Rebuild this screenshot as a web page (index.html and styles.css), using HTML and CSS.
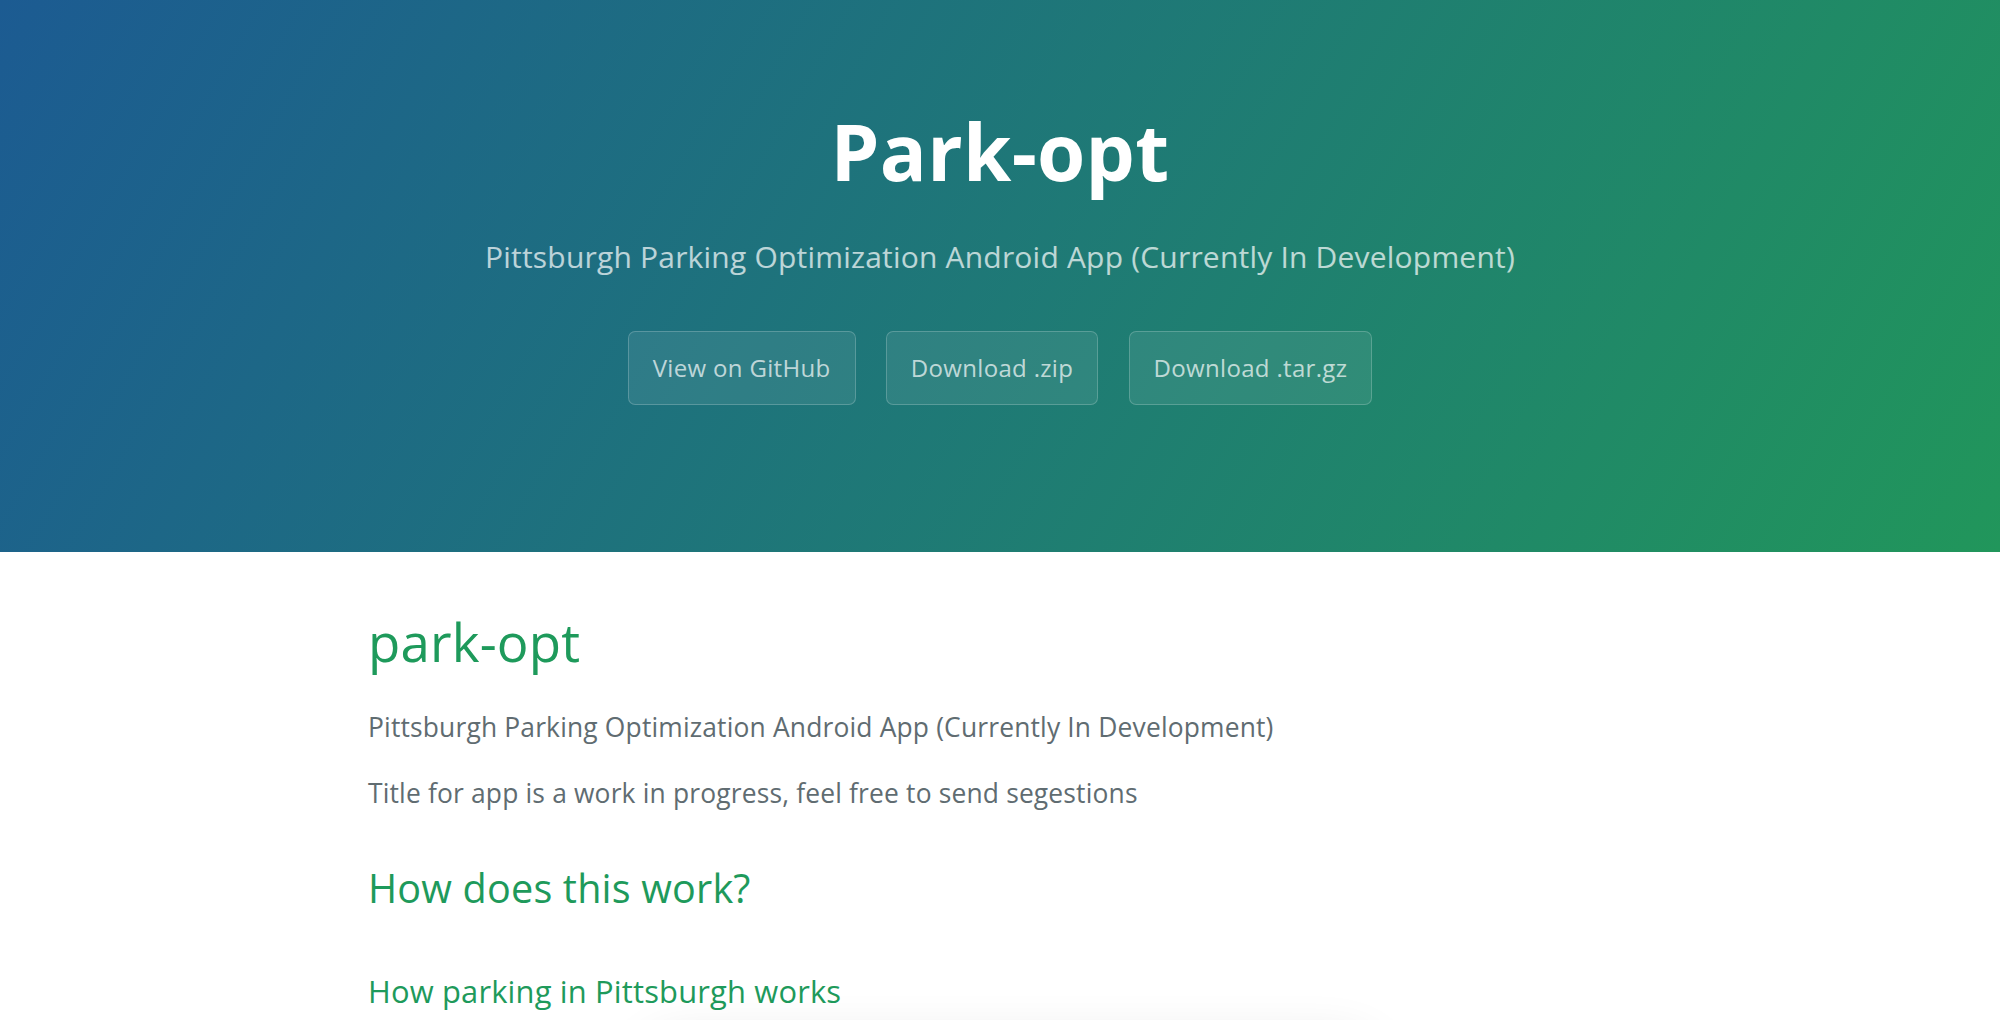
FILE: index.html
```html
<!DOCTYPE html>
<html lang="en">
<head>
<meta charset="utf-8">
<title>park-opt by spacebiker</title>
<link rel="stylesheet" href="styles.css">
</head>
<body>
<section class="page-header">
  <h1 class="project-name">Park-opt</h1>
  <h2 class="project-tagline">Pittsburgh Parking Optimization Android App (Currently In Development)</h2>
  <div class="actions">
    <a href="#" class="btn">View on GitHub</a>
    <a href="#" class="btn">Download .zip</a>
    <a href="#" class="btn">Download .tar.gz</a>
  </div>
</section>
<section class="main-content">
  <h1 class="h-main">park-opt</h1>
  <p class="para">Pittsburgh Parking Optimization Android App (Currently In Development)</p>
  <p class="para">Title for app is a work in progress, feel free to send segestions</p>
  <h2 class="h-sub">How does this work?</h2>
  <h3 class="h-minor">How parking in Pittsburgh works</h3>
</section>
<div class="fold-shadow"></div>
</body>
</html>
```
FILE: styles.css
```css
html, body {
  margin: 0;
  padding: 0;
}
body {
  font-family: "Open Sans", "Liberation Sans", Arial, sans-serif;
  font-size: 24px;
  line-height: 1.5;
  color: #606c71;
  background: #fff;
  height: 1020px;
  overflow: hidden;
  position: relative;
}
.page-header {
  color: #fff;
  text-align: center;
  background-color: #1c5b92;
  background-image: linear-gradient(120deg, #1c5b92, #21965b);
  padding: 93px 144px 123px;
}
.project-name {
  font-size: 78px;
  line-height: 1.5;
  font-weight: 700;
  margin: 0 0 24px;
  letter-spacing: 0.3px;
}
.project-tagline {
  font-size: 30px;
  line-height: 1.5;
  font-weight: 400;
  margin: 0 0 52px;
  opacity: 0.7;
  letter-spacing: 0.2px;
}
.actions {
  line-height: 1.5;
}
.btn {
  display: inline-block;
  margin-bottom: 24px;
  color: rgba(255, 255, 255, 0.7);
  background-color: rgba(255, 255, 255, 0.08);
  border: 1px solid rgba(255, 255, 255, 0.2);
  border-radius: 7.2px;
  padding: 18px 24px;
  text-decoration: none;
  font-size: 24px;
  line-height: 36px;
  letter-spacing: 0.33px;
}
.btn + .btn {
  margin-left: 24px;
}
.main-content {
  max-width: 1536px;
  margin: 0 auto;
  padding: 50px 144px 48px;
  box-sizing: border-box;
  font-size: 26.4px;
  line-height: 1.5;
  word-wrap: break-word;
  position: relative;
  left: -8px;
  letter-spacing: 0.17px;
}
.h-main, .h-sub, .h-minor {
  color: #1e9a5b;
  font-weight: 400;
  line-height: 1.5;
  margin: 45px 0 24px;
}
.h-main {
  font-size: 52.8px;
  margin-top: 0;
  margin-bottom: 27px;
}
.h-sub {
  font-size: 39.6px;
}
.h-minor {
  font-size: 30.9px;
  margin-top: 50px;
}
.para {
  margin: 26.4px 0;
}
.h-main + .para {
  margin-top: 0;
}
.fold-shadow {
  position: absolute;
  left: 640px;
  width: 740px;
  top: 1050px;
  height: 120px;
  border-radius: 40px;
  background: #fff;
  box-shadow: 0 -10px 50px rgba(0, 0, 0, 0.12);
}
```
